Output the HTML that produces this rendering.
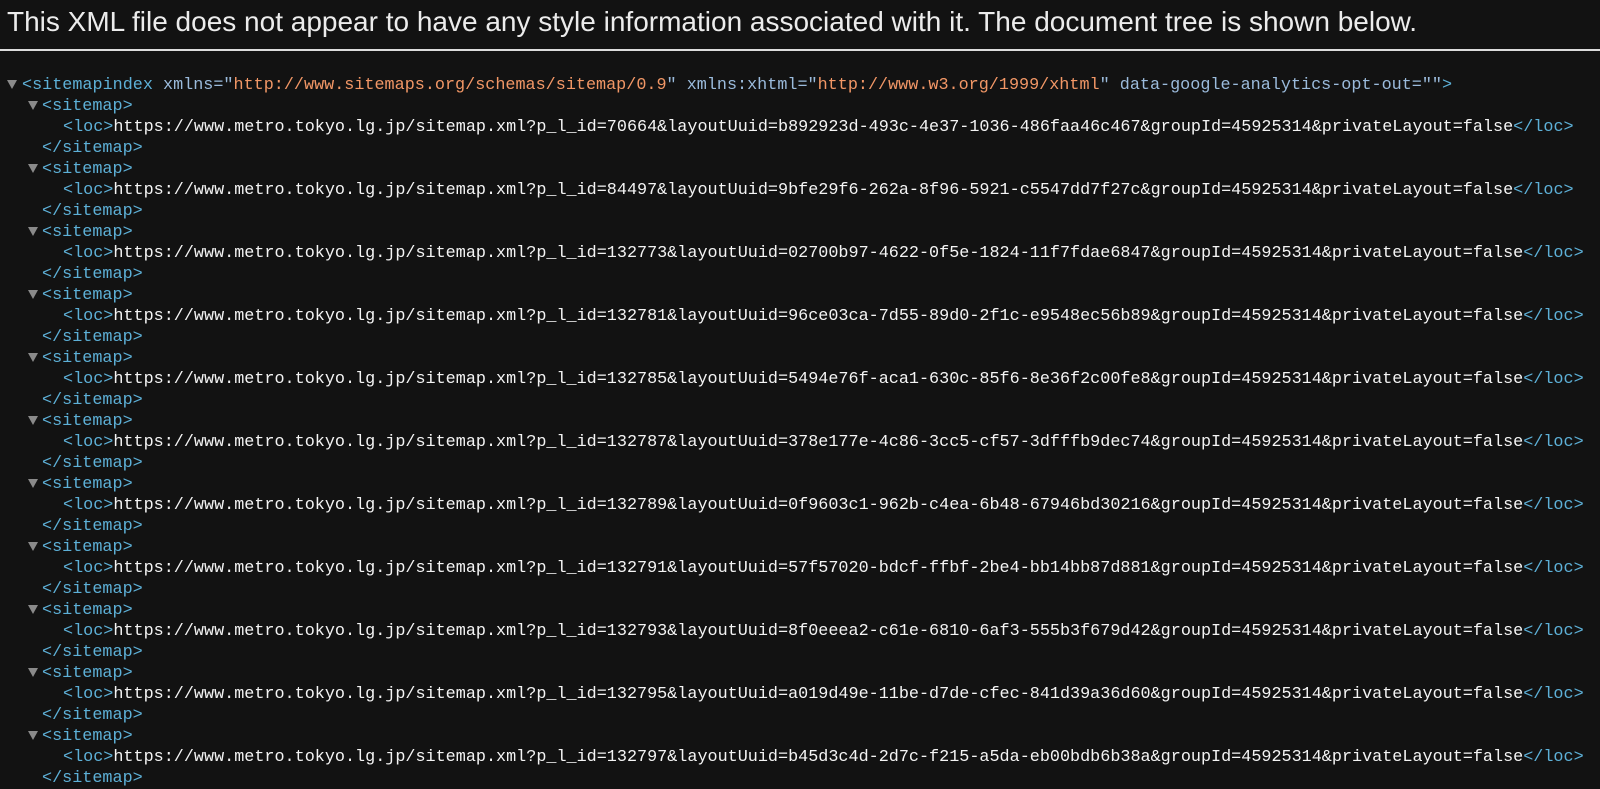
<!DOCTYPE html>
<html><head><meta charset="utf-8"><style>
html,body{margin:0;padding:0;background:#121212;width:1600px;height:789px;overflow:hidden}
.hdr{position:absolute;left:7px;top:5px;font:28px/34px "Liberation Sans",sans-serif;color:#ececec;white-space:nowrap}
.rule{position:absolute;left:0;top:49px;width:1600px;height:2px;background:#dcdcdc}
.l{position:absolute;font:16.8px/21px "Liberation Mono",monospace;color:#f4f4f4;white-space:pre}
.t{color:#5db0d7}.a{color:#9bbbdc}.v{color:#f29766}
.tri{position:absolute;width:0;height:0;border-left:5px solid transparent;border-right:5px solid transparent;border-top:9px solid #8a8a8a}
</style></head><body>
<div class="hdr">This XML file does not appear to have any style information associated with it. The document tree is shown below.</div>
<div class="rule"></div>
<div class="tri" style="left:7px;top:80px"></div>
<div class="l" style="left:22px;top:75px"><span class="t">&lt;sitemapindex</span> <span class="a">xmlns="</span><span class="v">http://www.sitemaps.org/schemas/sitemap/0.9</span><span class="a">"</span> <span class="a">xmlns:xhtml="</span><span class="v">http://www.w3.org/1999/xhtml</span><span class="a">"</span> <span class="a">data-google-analytics-opt-out=""</span><span class="t">&gt;</span></div>
<div id="c"></div>
<script>
var ids=[["70664","b892923d-493c-4e37-1036-486faa46c467"],["84497","9bfe29f6-262a-8f96-5921-c5547dd7f27c"],["132773","02700b97-4622-0f5e-1824-11f7fdae6847"],["132781","96ce03ca-7d55-89d0-2f1c-e9548ec56b89"],["132785","5494e76f-aca1-630c-85f6-8e36f2c00fe8"],["132787","378e177e-4c86-3cc5-cf57-3dfffb9dec74"],["132789","0f9603c1-962b-c4ea-6b48-67946bd30216"],["132791","57f57020-bdcf-ffbf-2be4-bb14bb87d881"],["132793","8f0eeea2-c61e-6810-6af3-555b3f679d42"],["132795","a019d49e-11be-d7de-cfec-841d39a36d60"],["132797","b45d3c4d-2d7c-f215-a5da-eb00bdb6b38a"]];
var h="";
for(var i=0;i<ids.length;i++){
 var y=96+i*63;
 h+='<div class="tri" style="left:28px;top:'+(y+5)+'px"></div>';
 h+='<div class="l" style="left:42px;top:'+y+'px"><span class="t">&lt;sitemap&gt;</span></div>';
 h+='<div class="l" style="left:63px;top:'+(y+21)+'px"><span class="t">&lt;loc&gt;</span>https://www.metro.tokyo.lg.jp/sitemap.xml?p_l_id='+ids[i][0]+'&amp;layoutUuid='+ids[i][1]+'&amp;groupId=45925314&amp;privateLayout=false<span class="t">&lt;/loc&gt;</span></div>';
 h+='<div class="l" style="left:42px;top:'+(y+42)+'px"><span class="t">&lt;/sitemap&gt;</span></div>';
}
document.getElementById("c").innerHTML=h;
</script>
</body></html>
